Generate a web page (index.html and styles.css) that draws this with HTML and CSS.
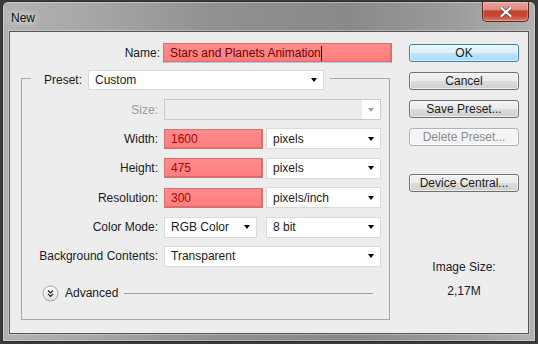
FILE: index.html
```html
<!DOCTYPE html>
<html lang="en">
<head>
  <meta charset="UTF-8" />
  <title>New</title>
  <link rel="stylesheet" href="styles.css">
</head>
<body>
  <div class="window">
    <div class="titlebar">
      <span class="title">New</span>
      <div class="close">
        <svg width="12" height="10" viewBox="0 0 12 10">
          <path d="M1.5 1 L10.5 9 M10.5 1 L1.5 9" stroke="#5b5b5b" stroke-width="3.6" stroke-linecap="square" />
          <path d="M1.5 1 L10.5 9 M10.5 1 L1.5 9" stroke="#fff" stroke-width="2" stroke-linecap="square" />
        </svg>
      </div>
    </div>

    <div class="client">
      <div class="form">
        <div class="name-row">
          <label>Name:</label>
          <div class="field red name"><span>Stars and Planets Animation</span><i class="caret"></i></div>
        </div>

        <div class="preset">
          <div class="preset-head">
            <div class="legend">
              <label>Preset:</label>
              <div class="select preset-select">Custom</div>
            </div>
          </div>

          <div class="rows">
            <label class="off">Size:</label>
            <div class="select disabled"></div>

            <label>Width:</label>
            <div class="pair">
              <div class="field red num">1600</div>
              <div class="select unit">pixels</div>
            </div>

            <label>Height:</label>
            <div class="pair">
              <div class="field red num">475</div>
              <div class="select unit">pixels</div>
            </div>

            <label>Resolution:</label>
            <div class="pair">
              <div class="field red num">300</div>
              <div class="select unit">pixels/inch</div>
            </div>

            <label>Color Mode:</label>
            <div class="pair">
              <div class="select mode">RGB Color</div>
              <div class="select unit">8 bit</div>
            </div>

            <label>Background Contents:</label>
            <div class="select">Transparent</div>
          </div>

          <div class="advanced">
            <svg class="adv-icon" width="17" height="17" viewBox="0 0 17 17">
              <defs>
                <linearGradient id="advfill" x1="0" y1="0" x2="0" y2="1">
                  <stop offset="0" stop-color="#ffffff" />
                  <stop offset="1" stop-color="#dedede" />
                </linearGradient>
              </defs>
              <circle cx="8.5" cy="8.5" r="7.5" fill="url(#advfill)" stroke="#a4a4a4" />
              <path d="M6 5.5 L8.5 8 L11 5.5 M6 8.8 L8.5 11.3 L11 8.8" fill="none" stroke="#222" stroke-width="1.2" />
            </svg>
            <span>Advanced</span>
            <div class="rule"></div>
          </div>
        </div>
      </div>

      <div class="side">
        <div class="btn default">OK</div>
        <div class="btn">Cancel</div>
        <div class="btn">Save Preset...</div>
        <div class="btn off">Delete Preset...</div>
        <div class="btn central">Device Central...</div>

        <div class="image-size">
          <div>Image Size:</div>
          <div>2,17M</div>
        </div>
      </div>
    </div>
  </div>
</body>
</html>
```

FILE: styles.css
```css
* {
  margin: 0;
  padding: 0;
  box-sizing: border-box;
}

html, body {
  height: 100%;
  overflow: hidden;
  background: #3b3b3b;
  font-family: 'Liberation Sans', Arial, sans-serif;
  font-size: 12px;
  color: #1b1b1b;
}

.window {
  width: 534px;
  height: 341px;
  margin: 1px 2px;
  border: 1px solid #2e2e2e;
  border-radius: 6px 6px 1px 1px;
  padding: 0 6px;
  background: linear-gradient(90deg, #b2b2b2, #a8a8a8 15%, #909090 40%, #898989 65%, #9c9c9c 85%, #b2b2b2);
  box-shadow: inset 0 0 0 1px rgba(255, 255, 255, 0.35);
}

.titlebar {
  height: 29px;
  display: flex;
  justify-content: space-between;
  align-items: flex-start;
}

.title {
  margin: 9px 0 0 2px;
  color: #111;
  text-shadow: 0 0 6px #e8e8e8, 0 0 10px #e8e8e8;
}

.close {
  width: 47px;
  height: 20px;
  display: flex;
  align-items: center;
  justify-content: center;
  border: 1px solid #5c2b23;
  border-top: none;
  border-radius: 0 0 5px 5px;
  background: linear-gradient(#e8a598 0%, #d98c7f 40%, #c53e2e 48%, #c84534 72%, #e07b6a 100%);
  box-shadow: inset 0 0 0 1px rgba(255, 255, 255, 0.25);
}

.client {
  height: 303px;
  display: flex;
  padding-left: 11px;
  background: #ededed;
  border: 1px solid #555;
  box-shadow: 0 0 0 1px rgba(255, 255, 255, 0.3);
}

.form {
  width: 372px;
  margin-top: 11px;
}

label {
  text-align: right;
  white-space: nowrap;
}

.name-row {
  height: 20px;
  display: flex;
  align-items: center;
  gap: 3px;
}

.name-row label {
  width: 139px;
}

.field {
  height: 20px;
  display: flex;
  align-items: center;
  padding-left: 6px;
}

.red {
  background: linear-gradient(#ff8b8b, #ff7e7e);
  border: 1px solid #cf7474;
  box-shadow: inset -1px -1px 0 #e46a6a;
}

.name {
  width: 229px;
  color: #6e0000;
  border-bottom-color: #b9c9dc;
}

.caret {
  width: 1px;
  height: 15px;
  background: #000;
}

.num {
  width: 99px;
  color: #b30000;
}

.select {
  height: 21px;
  display: flex;
  align-items: center;
  padding: 0 6px;
  background: #fff;
  border: 1px solid #dadada;
}

.select::after {
  content: "";
  margin-left: auto;
  border-top: 4px solid #000;
  border-left: 3.5px solid transparent;
  border-right: 3.5px solid transparent;
}

.select.disabled {
  background: linear-gradient(to left, #fff 18px, #ececec 18px);
  border-color: #cacaca;
}

.select.disabled::after {
  border-top-color: #a3a3a3;
}

/* group box: the legend row rides up over the top border */
.preset {
  width: 369px;
  margin-top: 15px;
  border: 1px solid #a9a9a9;
}

.preset-head {
  display: flex;
  margin-top: -9px;
  padding-left: 9px;
}

.legend {
  display: flex;
  align-items: center;
  gap: 6px;
  padding: 0 6px 0 13px;
  background: #ededed;
}

.preset-select {
  width: 236px;
  height: 20px;
}

.rows {
  display: grid;
  grid-template-columns: 136px 217px;
  column-gap: 6px;
  row-gap: 8.4px;
  align-items: center;
  padding-top: 9px;
}

.off {
  color: #9c9c9c;
}

.pair {
  display: flex;
  justify-content: space-between;
  align-items: center;
}

.unit {
  width: 115px;
}

.mode {
  width: 93px;
}

.advanced {
  display: flex;
  align-items: center;
  gap: 6px;
  height: 17px;
  margin: 18px 16px 17px 20px;
}

.advanced .rule {
  flex: 1;
  height: 1px;
  background: #9f9f9f;
}

.side {
  width: 110px;
  margin: 12px 0 0 16px;
  display: flex;
  flex-direction: column;
  gap: 10px;
}

.btn {
  height: 18px;
  display: flex;
  align-items: center;
  justify-content: center;
  border: 1px solid #707070;
  border-radius: 3px;
  background: linear-gradient(#f2f2f2 0%, #ebebeb 50%, #dddddd 52%, #cfcfcf 100%);
  box-shadow: inset 0 0 0 1px rgba(255, 255, 255, 0.6);
}

.btn.default {
  border-color: #3c7fb1;
  background: linear-gradient(#eaf6fd 0%, #d9f0fc 50%, #bee6fd 52%, #a7d9f5 100%);
}

.btn.off {
  color: #8d8d8d;
  border-color: #adb2b5;
  background: #f4f4f4;
}

.btn.central {
  margin-top: 18px;
}

.image-size {
  margin-top: 53px;
  line-height: 24px;
  text-align: center;
}
```
